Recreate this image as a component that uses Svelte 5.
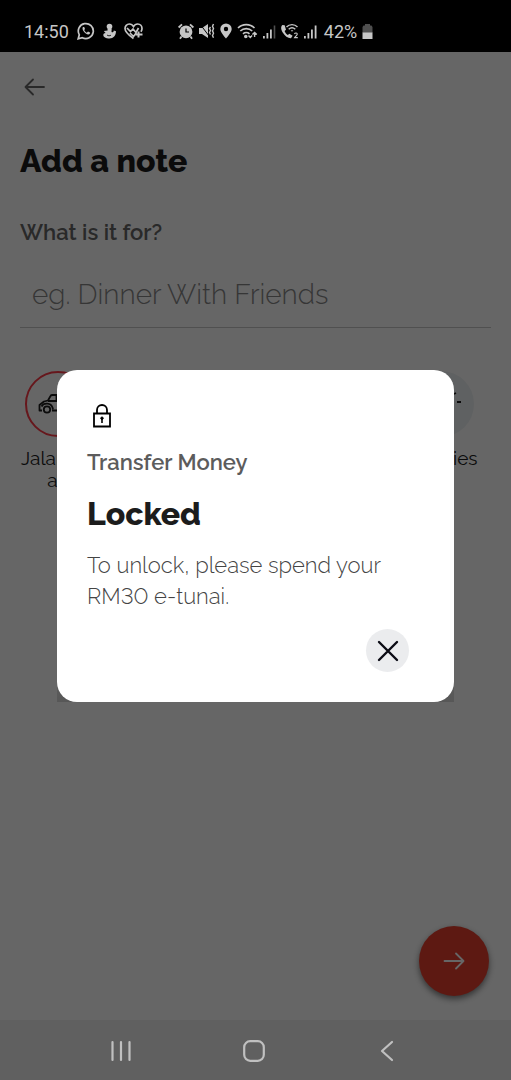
<script>
  const categories = [
    { name: "Jalan-jalan", icon: "car", selected: true },
    { name: "Hobbies", icon: "bulb", selected: false },
  ];

  let note = $state("");
  let showLocked = $state(true);

  function closeLocked() {
    showLocked = false;
  }
</script>

<div class="phone">
  <header class="status">
    <div class="status_left">
      <span>14:50</span>
      <svg width="18" height="18" viewBox="0 0 18 18" fill="none" stroke="currentColor" stroke-width="1.7">
        <path d="M1.2 16.8 2.3 12.8A7.5 7.5 0 1 1 5.3 15.7Z" />
        <path d="M6 5c-.8 1-.6 2.500.6 4.300s3.200 3.200 4.600 3.200 2.200-1.400 1.800-1.900l-2-1-1.200 1.100C8.500 10.200 7.600 9.200 7.200 8L8 7 7.200 5Z" fill="currentColor" stroke="none" />
      </svg>
      <svg width="13" height="16" viewBox="0 0 13 16" fill="currentColor">
        <circle cx="6.500" cy="3.500" r="2.800" />
        <path d="M4.500 5.500h4.200L8.500 9c1.500.8 2.100-.2 2.300-1.500l2.200.8c-.1 4.200-2.500 7.200-6.500 7.200C3 15.500.3 14 .3 12c0-1 .9-1.900 2.300-1.900L.8 8 4.600 7.600Z" />
        <path d="M4 12c1.200 1 2.800 1 4 .2" stroke="#000" stroke-width=".8" fill="none" />
      </svg>
      <svg width="20" height="17" viewBox="0 0 20 17" fill="none" stroke="currentColor" stroke-width="1.700">
        <path d="M9.500 15.500C4.500 12 1 9.200 1 5.500 1 3 2.900 1 5.300 1c1.800 0 3.300.9 4.200 2.500C10.400 1.900 12 1 13.700 1 16.200 1 18 3 18 5.500c0 1.200-.4 2.300-1.100 3.300" />
        <path d="m3 5 3.500 3.500L9 6l3 3.500L14.500 5M6 10l3.500 3.500 3-4" />
        <path d="M14.500 8.500v6M11.500 11.500h7" stroke-width="2" />
      </svg>
    </div>
    <div class="status_right">
      <svg width="16" height="17" viewBox="0 0 16 17" fill="currentColor">
        <circle cx="8" cy="8.800" r="6.400" />
        <path d="M.6 4.500 4 1.400M15.400 4.500 12 1.400M3.500 13.500 2 15.800M12.500 13.500l1.500 2.300" stroke="currentColor" stroke-width="1.800" />
        <path d="M8 5.500v3.500h3" stroke="#000" stroke-width="1.200" fill="none" />
      </svg>
      <svg width="16" height="16" viewBox="0 0 16 16" fill="currentColor">
        <path d="M0 5h3L9 1v14l-6-4H0Z" />
        <path d="M1 1l9 12" stroke="#000" stroke-width="1" />
        <path d="M11.500 4l-1 1.500 1 2-1 2 1 2M14.500 1l-1 2.300 1 2.300-1 2.300 1 2.300-1 2.300 1 2.300" stroke="currentColor" stroke-width="1.400" fill="none" />
      </svg>
      <svg width="12" height="16" viewBox="0 0 12 16" fill="currentColor">
        <path fill-rule="evenodd" d="M6 .4A5.700 5.700 0 0 0 .3 6C.3 9.500 6 15.500 6 15.500S11.700 9.500 11.700 6A5.700 5.700 0 0 0 6 .4Zm0 3.400a2.200 2.200 0 1 1 0 4.400 2.200 2.200 0 0 1 0-4.400Z" />
      </svg>
      <svg width="21" height="17" viewBox="0 0 21 17" fill="none" stroke="currentColor" stroke-width="1.600">
        <path d="M1 5c4.500-4.500 12-4.500 16.500 0M3.300 8c3.300-3.200 8.600-3.200 11.900 0M6 10.900c1.800-1.700 4.700-1.700 6.500 0" />
        <circle cx="8.800" cy="13.500" r="1" fill="currentColor" />
        <path d="m11.500 12.500 1.800 2 1.800-2M15.400 11.500l2.200-2 2.200 2M17.600 10v4" stroke-width="1.400" />
      </svg>
      <svg width="13" height="15" viewBox="1 0 13 15" fill="currentColor">
        <path d="M1 12h1.800v2.500H1ZM4.500 9h1.800v5.500H4.500ZM8 5.500h1.800v9H8Z" />
        <path d="M11.700 1.500h1.600v13h-1.600Z" opacity=".4" />
      </svg>
      <svg width="18" height="17" viewBox="1 0 18 17" fill="currentColor">
        <path d="M2.500 2C.8 3.500.6 6 2.700 9.500s5.500 6 8.300 5.800l1.600-2.500-3.200-2-1.600 1.200C6.300 11 5 9.500 4.600 8L6 6.700 4.700 2.200Z" />
        <path d="M6.500 4C9.500.8 14.500.8 17.500 4M8.700 6.300c1.900-1.800 4.700-1.800 6.600 0" fill="none" stroke="currentColor" stroke-width="1.400" />
        <path d="m10.700 7.200 1.300 1.600 1.300-1.600Z" />
        <path d="M14.500 11c.5-1.500 3-1.200 2.700.4-.2 1-1.600 1.600-2.600 3.200h3.200" fill="none" stroke="currentColor" stroke-width="1.100" />
      </svg>
      <svg width="13" height="15" viewBox="1 0 13 15" fill="currentColor">
        <path d="M1 12h1.800v2.500H1ZM4.500 9h1.800v5.500H4.500ZM8 5.500h1.800v9H8ZM11.700 1.500h1.800v13h-1.800Z" />
      </svg>
      <span class="percent">42%</span>
      <svg width="11" height="17" viewBox="0 0 11 17" fill="currentColor">
        <path d="M3 1h5v1.500h1.500l1 1.500v6H.5V4l1-1.500H3Z" opacity=".4" />
        <path d="M.5 9.500h10V16H.5Z" />
      </svg>
    </div>
  </header>

  <main class="screen">
    <button class="back" aria-label="Back">
      <svg width="22" height="18" viewBox="0 0 22 18" fill="none" stroke="currentColor" stroke-width="1.800" stroke-linecap="round" stroke-linejoin="round">
        <path d="M20 9H1.500M9 1.500 1.500 9 9 16.500" />
      </svg>
    </button>

    <h1>Add a note</h1>
    <label for="note">What is it for?</label>
    <input id="note" type="text" bind:value={note} placeholder="eg. Dinner With Friends" />

    <div class="categories">
      {#each categories as category}
        <button class="category">
          <span class="ring" class:selected={category.selected}>
            {#if category.icon === "car"}
              <svg width="40" height="20" viewBox="0 0 40 20" fill="none" stroke="currentColor" stroke-width="1.800" stroke-linejoin="round">
                <path d="M4 16.500H1.500V11L6 7.500l4-1L12.500 2Q13 1 14.500 1H24q2 0 3.500 1.500L31 7l6 2 1 7h-4M14 16.500h12" />
                <path d="M10 7h19M18.500 1v6M3.500 12.500c2-4 9.500-4 11 1l.5 2" />
                <circle cx="9" cy="15.500" r="3.200" />
                <circle cx="30" cy="15.500" r="3.200" />
              </svg>
            {:else}
              <!-- bulb with its rays -->
              <svg width="40" height="40" viewBox="0 0 40 40" fill="none" stroke="currentColor" stroke-width="1.800">
                <path d="M15 30v-4c-3-2-5-5-5-8a10 10 0 0 1 20 0c0 3-2 6-5 8v4ZM16 34h8M20 1v4M0 18h4M36 18h4M5 9l2 1M35 9l-2 1" />
              </svg>
            {/if}
          </span>
          <span class="category_name">{category.name}</span>
        </button>
      {/each}
    </div>

    <button class="next" aria-label="Next">
      <svg width="22" height="18" viewBox="0 0 22 18" fill="none" stroke="currentColor" stroke-width="1.800" stroke-linecap="round" stroke-linejoin="round">
        <path d="M1.500 9h19M13 1.500 20.500 9 13 16.500" />
      </svg>
    </button>
  </main>

  <nav class="navbar">
    <button aria-label="Recent apps">
      <svg width="22" height="22" viewBox="0 0 22 22" fill="none" stroke="currentColor" stroke-width="2.200" stroke-linecap="round">
        <path d="M2.500 2v18M11 2v18M19.500 2v18" />
      </svg>
    </button>
    <button aria-label="Home">
      <svg width="22" height="22" viewBox="0 0 22 22" fill="none" stroke="currentColor" stroke-width="2.200">
        <rect x="1.200" y="1.200" width="19.600" height="19.600" rx="6" />
      </svg>
    </button>
    <button aria-label="Go back">
      <svg width="22" height="22" viewBox="0 0 22 22" fill="none" stroke="currentColor" stroke-width="2.200" stroke-linecap="round" stroke-linejoin="round">
        <path d="M16 2 6 11l10 9" />
      </svg>
    </button>
  </nav>

  {#if showLocked}
    <div class="scrim">
      <div class="card_shadow">
        <div class="card" role="dialog" aria-labelledby="locked_title">
          <svg class="lock" width="18" height="24" viewBox="0 0 18 24" fill="none" stroke="currentColor" stroke-width="1.800">
            <path d="M1 9.500h16v13H1ZM4 9.500V6a5 5 0 0 1 10 0v3.500" />
            <path d="M9 15v4" stroke-width="1.600" />
            <circle cx="9" cy="14.200" r="1.200" fill="currentColor" stroke-width="1" />
          </svg>
          <p class="feature">Transfer Money</p>
          <h2 id="locked_title">Locked</h2>
          <p class="message">To unlock, please spend your RM30 e-tunai.</p>
          <button class="close" aria-label="Close" onclick={closeLocked}>
            <svg width="22" height="22" viewBox="0 0 22 22" fill="none" stroke="currentColor" stroke-width="2.400" stroke-linecap="round">
              <path d="m2 2 18 18M20 2 2 20" />
            </svg>
          </button>
        </div>
      </div>
    </div>
  {/if}
</div>

<style>
  :global(body) {
    background: #666;
  }
  .phone {
    min-height: 100vh;
    display: flex;
    flex-direction: column;
    position: relative;
    font-family: Raleway, Lato, sans-serif;
    font-variant-numeric: lining-nums;
    background: #fff;
  }
  svg {
    display: block;
    flex: none;
  }
  button {
    border: none;
    padding: 0;
    background: none;
    font: inherit;
    color: inherit;
    cursor: pointer;
  }
  h1, h2, p {
    margin: 0;
  }

  .status {
    height: 52px;
    box-sizing: border-box;
    padding: 10px 24px 0;
    display: flex;
    align-items: center;
    gap: 34px;
    background: #000;
    color: #c6c6c6;
    font-family: Roboto, sans-serif;
    font-size: 18px;
  }
  .status_left {
    display: flex;
    align-items: center;
    gap: 8px;
  }
  .status_right {
    display: flex;
    align-items: center;
    gap: 5px;
  }
  .percent {
    margin-left: 2px;
  }

  .screen {
    flex: 1;
    position: relative;
    padding: 26px 20px 0;
    color: #1c1c1c;
  }
  .back {
    display: block;
    margin-left: 4px;
    color: #666;
  }
  h1 {
    margin-top: 44px;
    font-size: 32px;
    line-height: 42px;
    font-weight: 800;
  }
  label {
    display: block;
    margin-top: 36px;
    font-size: 22px;
    line-height: 28px;
    font-weight: 600;
    color: #666;
  }
  input {
    display: block;
    width: 100%;
    height: 66px;
    margin-top: 16px;
    box-sizing: border-box;
    padding: 0 12px;
    border: none;
    border-bottom: 1px solid #c8c8c8;
    background: none;
    outline: none;
    font: inherit;
    font-size: 28px;
    font-weight: 300;
  }
  input::placeholder {
    color: #888;
    opacity: 1;
  }
  .categories {
    display: flex;
    justify-content: space-between;
    align-items: flex-start;
    margin: 43px 8px 0 -4px;
  }
  .category {
    width: 84px;
    display: flex;
    flex-direction: column;
    align-items: center;
    gap: 10px;
  }
  .ring {
    width: 66px;
    height: 66px;
    box-sizing: border-box;
    display: flex;
    align-items: center;
    justify-content: center;
    border-radius: 50%;
    background: #eef2f4;
  }
  .ring.selected {
    border: 2px solid #ff3b48;
    background: none;
  }
  .category_name {
    width: 84px;
    font-size: 19px;
    line-height: 22px;
    word-break: break-all;
  }
  .next {
    position: absolute;
    right: 22px;
    bottom: 24px;
    width: 70px;
    height: 70px;
    display: flex;
    align-items: center;
    justify-content: center;
    border-radius: 50%;
    background: #e8402f;
    color: #fff;
    box-shadow: 0 3px 6px rgba(0, 0, 0, 0.5);
  }

  .navbar {
    position: relative;
    z-index: 2;
    height: 60px;
    padding: 2px 57px 0 54px;
    box-sizing: border-box;
    display: flex;
    background: #606060;
    color: #c0c0c0;
  }
  .navbar button {
    flex: 1;
    display: flex;
    align-items: center;
    justify-content: center;
  }

  .scrim {
    position: absolute;
    inset: 52px 0 60px;
    z-index: 1;
    display: flex;
    align-items: center;
    justify-content: center;
    padding: 0 57px;
    background: rgba(0, 0, 0, 0.6);
  }
  .card_shadow {
    width: 100%;
    background: linear-gradient(transparent 85%, rgba(0, 0, 0, 0.15));
  }
  .card {
    display: flex;
    flex-direction: column;
    padding: 34px 45px 30px 30px;
    border-radius: 20px;
    background: #fff;
    color: #1c1c1c;
  }
  .lock {
    margin-left: 6px;
    color: #000;
  }
  .feature {
    margin-top: 20px;
    font-size: 22px;
    line-height: 28px;
    font-weight: 600;
    color: #5c5c5c;
  }
  h2 {
    margin-top: 18px;
    font-size: 32px;
    line-height: 40px;
    font-weight: 800;
  }
  .message {
    margin-top: 16px;
    font-size: 22px;
    line-height: 31px;
    font-weight: 300;
    color: #444;
  }
  .close {
    align-self: flex-end;
    width: 43px;
    height: 43px;
    margin-top: 17px;
    display: flex;
    align-items: center;
    justify-content: center;
    border-radius: 50%;
    background: #ebecee;
    color: #0b0b14;
  }
</style>
